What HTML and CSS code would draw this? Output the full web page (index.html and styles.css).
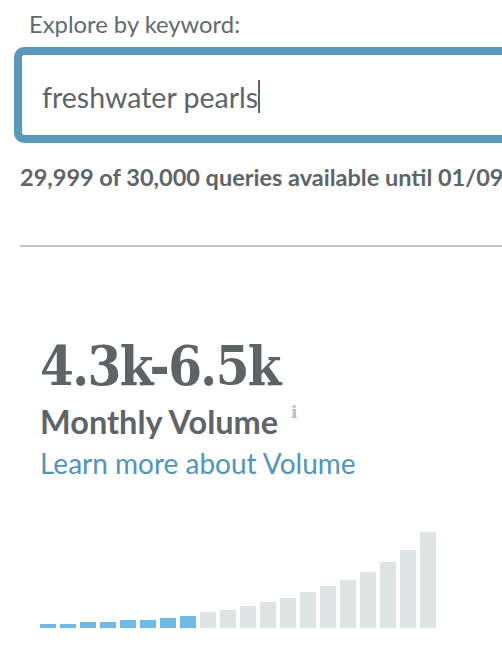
FILE: index.html
```html
<!DOCTYPE html>
<html>
<head>
<meta charset="utf-8">
<link rel="stylesheet" href="styles.css">
</head>
<body>
<div class="page">
  <section class="search">
    <div class="label">Explore by keyword:</div>
    <div class="field"><span class="value">freshwater pearls</span><span class="caret"></span></div>
    <div class="quota">29,999 of 30,000 queries available until 01/09/2020</div>
  </section>
  <hr class="rule">
  <section class="volume">
    <div class="big">4.3k-6.5k</div>
    <div class="title">Monthly Volume <sup class="info">i</sup></div>
    <a class="link" href="#">Learn more about Volume</a>
    <div class="chart">
      <div class="bar blue" style="height:4px"></div>
      <div class="bar blue" style="height:4px"></div>
      <div class="bar blue" style="height:6px"></div>
      <div class="bar blue" style="height:6px"></div>
      <div class="bar blue" style="height:8px"></div>
      <div class="bar blue" style="height:8px"></div>
      <div class="bar blue" style="height:10px"></div>
      <div class="bar blue" style="height:12px"></div>
      <div class="bar" style="height:16px"></div>
      <div class="bar" style="height:18px"></div>
      <div class="bar" style="height:22px"></div>
      <div class="bar" style="height:26px"></div>
      <div class="bar" style="height:30px"></div>
      <div class="bar" style="height:36px"></div>
      <div class="bar" style="height:42px"></div>
      <div class="bar" style="height:48px"></div>
      <div class="bar" style="height:56px"></div>
      <div class="bar" style="height:66px"></div>
      <div class="bar" style="height:78px"></div>
      <div class="bar" style="height:96px"></div>
    </div>
  </section>
</div>
</body>
</html>
```
FILE: styles.css
```css
html, body {
  margin: 0;
  padding: 0;
  background: #ffffff;
  overflow: hidden;
}
body {
  font-family: Lato, "Open Sans", sans-serif;
  color: #5e6467;
  width: 502px;
}
.page {
  padding-top: 10px;
}
.search {
  padding-left: 14px;
}
.label {
  font-size: 23.8px;
  line-height: 28px;
  padding-left: 15px;
  color: #616a70;
}
.field {
  margin-top: 9px;
  width: 488px;
  height: 96px;
  box-sizing: border-box;
  border: 8px solid #5a98ba;
  border-right: 0;
  border-radius: 10px 0 0 10px;
  padding: 25px 0 0 20px;
  display: flex;
  align-items: flex-start;
}
.value {
  font-size: 28.5px;
  line-height: 34px;
  color: #5e6467;
  white-space: nowrap;
}
.caret {
  display: block;
  width: 2px;
  height: 33px;
  background: #5e6467;
}
.quota {
  margin-top: 21px;
  padding-left: 6px;
  font-size: 23.5px;
  line-height: 27px;
  font-weight: 700;
  white-space: nowrap;
  overflow: hidden;
}
.rule {
  margin: 54px 0 0 20px;
  border: 0;
  height: 2px;
  background: #c6c6ca;
}
.volume {
  padding-left: 40px;
  padding-top: 91px;
}
.big {
  font-family: "DejaVu Serif", serif;
  font-stretch: condensed;
  font-weight: 700;
  font-size: 54px;
  line-height: 56px;
  color: #5e6466;
  letter-spacing: -1.6px;
}
.title {
  font-weight: 700;
  font-size: 32.5px;
  line-height: 38px;
  margin-top: 9px;
}
.info {
  font-family: "DejaVu Serif", serif;
  font-size: 17px;
  line-height: 0;
  color: #b5c0c0;
  font-weight: 700;
  vertical-align: 16px;
  margin-left: 5px;
}
.link {
  display: block;
  color: #5195b9;
  text-decoration: none;
  font-size: 28px;
  line-height: 30px;
  margin-top: 7px;
}
.chart {
  margin-top: 50px;
  height: 100px;
  display: flex;
  align-items: flex-end;
  gap: 4px;
}
.bar {
  width: 16px;
  background: #dde4e3;
}
.bar.blue {
  background: #6dbae6;
}
```
